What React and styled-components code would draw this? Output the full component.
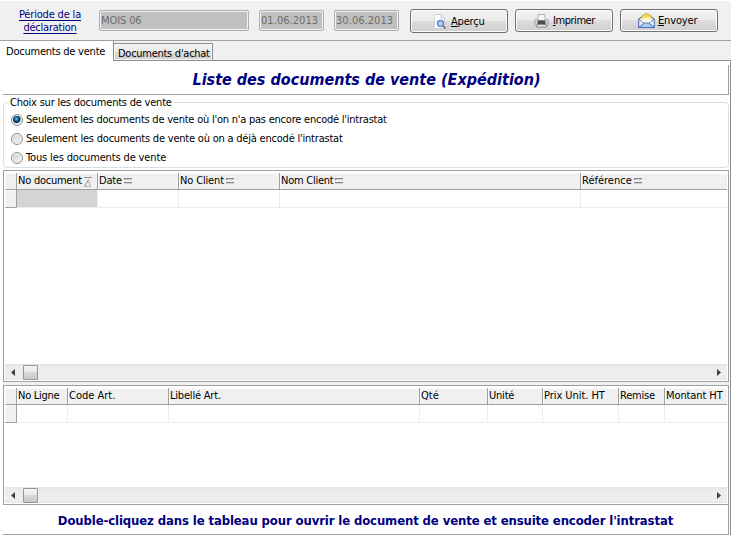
import React from 'react';
import styled, { createGlobalStyle } from 'styled-components';

const Global = createGlobalStyle`
  * { box-sizing: border-box; }
  body {
    margin: 0;
    background: #f0f0f0;
    color: #000;
    font: 11px/13px "DejaVu Sans Condensed", "DejaVu Sans", sans-serif;
  }
`;

const Window = styled.div`
  width: 731px;
  height: 535px;
  overflow: hidden;
  display: flex;
  flex-direction: column;
  background: #f0f0f0;
`;

const Text = styled.span`
  letter-spacing: ${(p) => p.$ls ?? -0.22}px;
  white-space: pre;
`;

const Toolbar = styled.header`
  height: 41px;
  flex: none;
  display: flex;
  align-items: flex-start;
  border-top: 1px solid #fff;
  border-bottom: 1px solid #a0a0a0;
`;

const PeriodLink = styled.a`
  width: 82px;
  margin: 7px 8px 0 9px;
  display: flex;
  flex-direction: column;
  align-items: center;
  color: #000080;
  text-decoration: underline;
  text-underline-offset: 1.5px;
`;

const Field = styled.div`
  width: ${(p) => p.$w}px;
  height: 21px;
  margin: 9px ${(p) => p.$gap}px 0 0;
  padding: 3px 1px 1px;
  border: 1px solid #afafaf;
  border-radius: 2px;
  background: #c0c0c0;
  box-shadow: inset 0 0 0 1px #f2f2f2;
  color: #6d6d6d;
`;

const Button = styled.button`
  width: 98px;
  height: ${(p) => p.$h || 23}px;
  margin: 8px ${(p) => p.$gap || 0}px 0 0;
  padding: ${(p) => p.$pad};
  display: flex;
  align-items: center;
  gap: ${(p) => p.$space}px;
  border: 1px solid #707070;
  border-radius: 3px;
  background: linear-gradient(#f2f2f2 0, #ebebeb 48%, #dddddd 50%, #cfcfcf 100%);
  box-shadow: inset 0 0 0 1px #fcfcfc;
  color: #000;
  font: inherit;
  svg { flex: none; }
`;

const TabBar = styled.nav`
  height: 20px;
  flex: none;
  display: flex;
  align-items: flex-end;
  box-shadow: inset 0 -1px #8c8e94;
`;

const ActiveTab = styled.div`
  width: 114px;
  height: 20px;
  padding: 4px 0 0 6px;
  border-right: 1px solid #8c8e94;
  background: #fff;
`;

const Tab = styled.div`
  width: 99px;
  height: 18px;
  padding: 3px 0 0 4px;
  border: 1px solid #8c8e94;
  border-left: 0;
  background: linear-gradient(#f2f2f2 0, #ebebeb 48%, #dddddd 50%, #d0d0d0 100%);
  box-shadow: inset 0 0 0 1px #f6f6f6;
`;

const Sheet = styled.main`
  flex: 1;
  display: flex;
  flex-direction: column;
  padding-left: 3px;
  padding-right: 1px;
  background: #fff;
  border-right: 1px solid #8c8e94;
  border-top: 1px solid #fff;
`;

const Title = styled.h1`
  height: 30px;
  flex: none;
  margin: 3px 0 0;
  display: flex;
  justify-content: center;
  padding: 5px 0 0 2px;
  border-right: 1px solid #a0a0a0;
  border-bottom: 1px solid #a0a0a0;
  color: #000080;
  font-size: 16px;
  line-height: 20px;
  font-weight: bold;
  font-style: italic;
`;

const Choices = styled.fieldset`
  height: 72px;
  flex: none;
  min-width: 0;
  margin: 1px 0 2px;
  padding: 4px 8px 0 7px;
  display: flex;
  flex-direction: column;
  gap: 6px;
  border: 1px solid #d5dfe5;
  border-radius: 4px;
`;

const Legend = styled.legend`
  height: 13px;
  padding: 0 1px;
  margin-left: -2px;
`;

const Choice = styled.label`
  height: 13px;
  display: flex;
  align-items: center;
  gap: 3px;
`;

const RadioDot = styled.span`
  width: 12px;
  height: 12px;
  flex: none;
  border: 1px solid #8e8f8f;
  border-radius: 50%;
  box-shadow: inset 0 0 0 1px #f4f4f4;
  background: ${(p) =>
    p.$on
      ? 'radial-gradient(circle at 45% 40%, #5fd0f5 0, #1a6fa5 22%, #0b2c52 36%, #16395e 44%, #dfe4e8 56%)'
      : 'linear-gradient(135deg, #cbcfd5, #f6f6f6)'};
`;

const Grid = styled.section`
  height: ${(p) => p.$h}px;
  flex: none;
  margin-bottom: ${(p) => p.$gap}px;
  padding: 2px 1px 1px;
  display: flex;
  flex-direction: column;
  border: 1px solid #a0a0a0;
  box-shadow: 0 ${(p) => p.$gap}px #f0f0f0;
  background: #fff;
`;

const GridRow = styled.div`
  display: grid;
  flex: none;
  grid-template-columns: ${(p) => p.$cols};
`;

const HeadCell = styled.div`
  height: 17px;
  padding: 1px 0 0 1px;
  display: flex;
  overflow: hidden;
  border-bottom: 1px solid #a0a0a0;
  border-right: ${(p) => (p.$last ? 0 : 1)}px solid #a0a0a0;
  background: #f0f0f0;
  box-shadow: inset 1px 1px #fafafa;
  svg { flex: none; margin: 3px 0 0 2px; }
`;

const Cell = styled.div`
  height: 18px;
  border-right: ${(p) => (p.$last ? 0 : 1)}px solid #ececec;
  border-bottom: 1px solid #ececec;
  background: ${(p) => (p.$selected ? '#d4d4d4' : '#fff')};
`;

const RowMarker = styled.div`
  height: 18px;
  border-right: 1px solid #a0a0a0;
  border-bottom: 1px solid #a0a0a0;
  background: #f0f0f0;
  box-shadow: inset 1px 1px #fafafa;
`;

const ScrollBar = styled.div`
  height: 16px;
  margin-top: auto;
  padding: 0 6px;
  display: flex;
  align-items: center;
  background: linear-gradient(#e3e3e3, #ededed 20%, #ededed 80%, #e8e8e8);
`;

const Thumb = styled.div`
  width: 15px;
  height: 15px;
  margin: 0 auto 0 8px;
  border: 1px solid #979797;
  border-radius: 1px;
  background: linear-gradient(#f4f4f4 0, #e9e9e9 48%, #d9d9dc 50%, #c8c8cc 100%);
`;

const Hint = styled.footer`
  flex: 1;
  padding-top: 8px;
  display: flex;
  justify-content: center;
  border-right: 1px solid #a0a0a0;
  border-bottom: 1px solid #a0a0a0;
  color: #000080;
  font-size: 13px;
  line-height: 15px;
  font-weight: bold;
`;

const PreviewIcon = () => (
  <svg width="14" height="16" viewBox="0 0 14 16">
    <path d="M1.5 .5h6.500l3.500 3.500v10.500h-10z" fill="#fff" stroke="#cdd1d6" />
    <path d="M8 .5v3.500h3.500" fill="#e6eaee" stroke="#cdd1d6" />
    <circle cx="7.500" cy="9.500" r="3" fill="#b4d2f4" stroke="#6486c4" strokeWidth="1.500" />
    <path d="M10 12l2.500 2.500" stroke="#77797f" strokeWidth="2" />
  </svg>
);

const PrintIcon = () => (
  <svg width="15" height="14" viewBox="0 0 15 14">
    <path d="M4 .5h7v6H4z" fill="#f6f6f6" stroke="#b0b0b0" />
    <path d="M.8 7Q.8 5.200 2.500 5.200L3.800 7h7.400l1.300-1.800q1.700 0 1.700 1.800v3.500q0 1-1 1H1.800q-1 0-1-1z" fill="#d2d2d4" stroke="#9a9a9c" strokeWidth=".8" />
    <path d="M4 6.500h7l.8 4H3.200z" fill="#4e4e50" />
    <path d="M3 10.500h9l.5 2.500h-10z" fill="#e8e8e8" stroke="#777" strokeWidth=".8" />
  </svg>
);

const MailIcon = () => (
  <svg width="17" height="16" viewBox="0 0 17 16">
    <path d="M.8 6L5 2.500h7L16.200 6v8.500H.8z" fill="#fff" stroke="#5468a8" />
    <path d="M2.800 5.500Q4.500 .8 8.500 .8t5.700 4.700L12.500 7h-8z" fill="#f6dc52" stroke="#b99a3c" strokeWidth=".7" />
    <path d="M3.500 6Q8.500 3 13.500 6v2.500l-3 2.500h-4l-3-2.500z" fill="#fffbe0" />
    <path d="M.8 6l5.500 4.500-5.500 4zM16.200 6l-5.500 4.500 5.500 4z" fill="#e4f0fd" stroke="#5468a8" strokeWidth=".8" />
    <path d="M.8 14.500L6.300 10h4.400l5.500 4.500z" fill="#a6cff7" stroke="#4a68b4" strokeWidth=".9" />
  </svg>
);

const SortNone = () => (
  <svg width="9" height="8" viewBox="0 0 9 8" shapeRendering="crispEdges">
    <path d="M0 1h8v1H1v1H0zM0 5h8v1H0z" fill="#858585" />
    <path d="M1 2h7v1H1zM0 6h8v1H0z" fill="#d0d0d0" />
  </svg>
);

const SortAsc = () => (
  <svg width="9" height="11" viewBox="0 0 9 11">
    <path d="M0 .5h8" stroke="#8c8c8c" />
    <path d="M.5 9.500L4.500 2.500" stroke="#8c8c8c" />
    <path d="M4.500 3l2 6.500H0" fill="none" stroke="#b4b4b4" />
  </svg>
);

const Arrow = ({ right }) => (
  <svg width="4" height="7" viewBox="0 0 4 7">
    <path d={right ? 'M0 0v7l4-3.500z' : 'M4 0v7L0 3.500z'} fill="#404040" />
  </svg>
);

const DOC_COLS = '12px 81px 81px 101px 301px 1fr';
const DOC_HEADS = [
  { t: 'No document', ls: -0.24, asc: true },
  { t: 'Date', ls: -0.2, sort: true },
  { t: 'No Client', ls: -0.15, sort: true },
  { t: 'Nom Client', ls: -0.25, sort: true },
  { t: 'Référence', ls: 0, sort: true },
];

const LINE_COLS = '12px 51px 101px 251px 68px 55px 76px 46px 1fr';
const LINE_HEADS = [
  { t: 'No Ligne', ls: -0.26 },
  { t: 'Code Art.', ls: 0 },
  { t: 'Libellé Art.', ls: -0.2 },
  { t: 'Qté', ls: 0 },
  { t: 'Unité', ls: -0.2 },
  { t: 'Prix Unit. HT', ls: -0.05 },
  { t: 'Remise', ls: -0.22 },
  { t: 'Montant HT', ls: -0.1 },
];

const CHOICES = [
  { t: "Seulement les documents de vente où l'on n'a pas encore encodé l'intrastat", ls: -0.23, on: true },
  { t: "Seulement les documents de vente où on a déjà encodé l'intrastat", ls: -0.21 },
  { t: 'Tous les documents de vente', ls: -0.14 },
];

function DataGrid({ heads, cols, height, gap, selectFirst }) {
  return (
    <Grid $h={height} $gap={gap}>
      <GridRow $cols={cols}>
        <HeadCell />
        {heads.map((h, i) => (
          <HeadCell key={h.t} $last={i === heads.length - 1}>
            <Text $ls={h.ls}>{h.t}</Text>
            {h.asc && <SortAsc />}
            {h.sort && <SortNone />}
          </HeadCell>
        ))}
      </GridRow>
      <GridRow $cols={cols}>
        <RowMarker />
        {heads.map((h, i) => (
          <Cell key={h.t} $last={i === heads.length - 1} $selected={selectFirst && i === 0} />
        ))}
      </GridRow>
      <ScrollBar>
        <Arrow />
        <Thumb />
        <Arrow right />
      </ScrollBar>
    </Grid>
  );
}

export default function App() {
  return (
    <Window>
      <Global />
      <Toolbar>
        <PeriodLink>
          <Text $ls={-0.18}>Période de la</Text>
          <Text $ls={-0.24}>déclaration</Text>
        </PeriodLink>
        <Field $w={150} $gap={10}><Text $ls={-0.1}>MOIS 06</Text></Field>
        <Field $w={65} $gap={10}><Text $ls={0.05}>01.06.2013</Text></Field>
        <Field $w={65} $gap={11}><Text $ls={0.05}>30.06.2013</Text></Field>
        <Button $h={24} $gap={7} $pad="1px 0 0 22px" $space={4}>
          <PreviewIcon />
          <Text $ls={-0.2}><u>A</u>perçu</Text>
        </Button>
        <Button $gap={7} $pad="0 0 0 18px" $space={4}>
          <PrintIcon />
          <Text $ls={-0.45}><u>I</u>mprimer</Text>
        </Button>
        <Button $pad="0 0 0 17px" $space={3}>
          <MailIcon />
          <Text $ls={-0.15}><u>E</u>nvoyer</Text>
        </Button>
      </Toolbar>
      <TabBar>
        <ActiveTab><Text $ls={-0.23}>Documents de vente</Text></ActiveTab>
        <Tab><Text $ls={-0.27}>Documents d'achat</Text></Tab>
      </TabBar>
      <Sheet>
        <Title><Text $ls={0}>Liste des documents de vente (Expédition)</Text></Title>
        <Choices>
          <Legend><Text $ls={-0.22}>Choix sur les documents de vente</Text></Legend>
          {CHOICES.map((c) => (
            <Choice key={c.t}>
              <RadioDot $on={c.on} />
              <Text $ls={c.ls}>{c.t}</Text>
            </Choice>
          ))}
        </Choices>
        <DataGrid heads={DOC_HEADS} cols={DOC_COLS} height={212} gap={3} selectFirst />
        <DataGrid heads={LINE_HEADS} cols={LINE_COLS} height={120} gap={0} />
        <Hint><Text $ls={-0.12}>Double-cliquez dans le tableau pour ouvrir le document de vente et ensuite encoder l'intrastat</Text></Hint>
      </Sheet>
    </Window>
  );
}
